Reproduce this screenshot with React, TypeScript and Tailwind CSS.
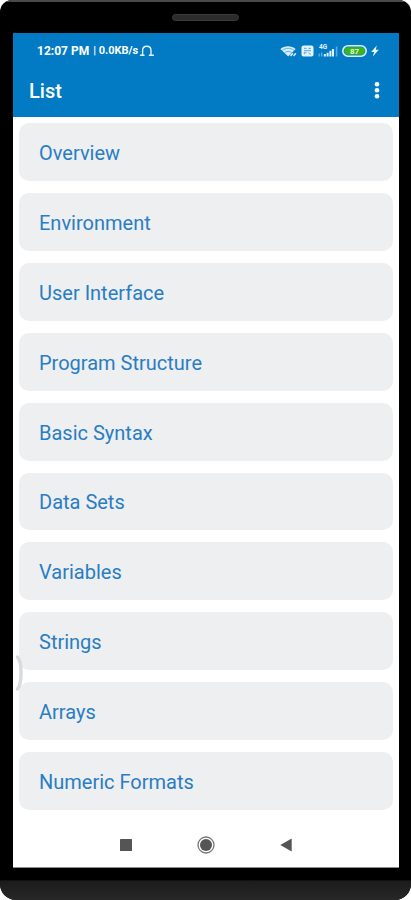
import React from "react";

const topics: string[] = [
  "Overview",
  "Environment",
  "User Interface",
  "Program Structure",
  "Basic Syntax",
  "Data Sets",
  "Variables",
  "Strings",
  "Arrays",
  "Numeric Formats",
];

function BellIcon() {
  return (
    <svg className="h-3 w-4" viewBox="0 0 16 12" fill="none" stroke="#e3f3ff" strokeWidth="1.4" aria-hidden="true">
      <path d="M1.5 10.3H5M3.6 10V5.4C3.6 2.6 5.4 1.2 7.8 1.2s4.2 1.4 4.2 4.2V10M10.4 10.3H14.4" strokeLinecap="round" />
    </svg>
  );
}

function WifiIcon() {
  return (
    <svg className="h-3 w-[17px]" viewBox="0 0 17 12" aria-hidden="true">
      <path d="M0.4 4C4.5 0.2 11.5 0.2 15.6 4L8.2 11.4Z" fill="#d5edfc" />
      <path d="M2.4 5.3c3.4-2.6 8.2-2.6 11.6 0M4.6 7.6c2-1.6 5.2-1.6 7.2 0" fill="none" stroke="#4ba5db" strokeWidth="0.8" />
      <path d="M10.6 11l2.2-2.8M13.6 11l2.2-2.8" stroke="#d5edfc" strokeWidth="1.5" />
    </svg>
  );
}

function VolteIcon() {
  return (
    <svg className="h-3 w-[13px]" viewBox="0 0 13 12" aria-hidden="true">
      <rect x="0.5" y="0.5" width="12" height="11" rx="2" fill="#e3f3ff" />
      <path d="M3 3.4h2.6M7.4 3.4H10M3 5.6h7M3.4 9.3V7.6h2.2M7.4 7.6l2.4 1.8" fill="none" stroke="#6fb4df" strokeWidth="1.1" />
    </svg>
  );
}

function SignalIcon() {
  return (
    <svg className="h-[14px] w-5" viewBox="0 0 20 14" aria-hidden="true">
      <text x="1" y="5.4" fontSize="6.5" fontWeight="700" fontFamily="Roboto, sans-serif" fill="#e3f3ff">4G</text>
      <path d="M1.2 9.5v3M3.6 8.5v4" stroke="#5eb2e4" strokeWidth="1.3" />
      <path d="M6.8 10v2.5M9.6 8.8v3.7M12.4 6.8v5.7M15 5v7.5" stroke="#e3f3ff" strokeWidth="2" />
      <path d="M18.6 2.5v10" stroke="#55abdf" strokeWidth="1.6" />
    </svg>
  );
}

function BatteryIcon() {
  return (
    <svg className="h-3 w-[25px]" viewBox="0 0 25 12" aria-hidden="true">
      <rect x="0.8" y="0.8" width="23.4" height="10.4" rx="5.2" fill="#1380bd" stroke="#d9eefa" strokeWidth="1.6" />
      <path d="M6.2 2.2H19a3.8 3.8 0 0 1 0 7.6H6.2a3.8 3.8 0 0 1 0-7.6Z" fill="#39b51d" />
      <text x="12.5" y="8.9" textAnchor="middle" fontSize="8" fontWeight="700" fontFamily="Roboto, sans-serif" fill="#e6f8dd">87</text>
    </svg>
  );
}

function BoltIcon() {
  return (
    <svg className="h-3 w-2" viewBox="0 0 8 12" fill="#edf8ff" aria-hidden="true">
      <path d="M5.8 0.6L0.2 6.9h3L1.8 11.6l6-6.8H4.7Z" />
    </svg>
  );
}

function StatusBar() {
  return (
    <div className="flex h-9 items-center justify-between pr-5 pl-6 text-white">
      <div className="flex items-center text-xs font-bold">
        <span>12:07 PM</span>
        <span className="pr-px pl-1 text-[11px]">| 0.0KB/s</span>
        <BellIcon />
      </div>
      <div className="flex items-center gap-1">
        <WifiIcon />
        <VolteIcon />
        <SignalIcon />
        <BatteryIcon />
        <BoltIcon />
      </div>
    </div>
  );
}

export default function App() {
  return (
    <div className="flex min-h-screen flex-col bg-white font-['Roboto',sans-serif]">
      <div className="flex flex-1 flex-col overflow-hidden rounded-t-xl rounded-b-2xl bg-black">
        <div className="flex h-[33px] items-center justify-center border-t-2 border-[#4a4a4a]">
          <div className="h-[7px] w-[67px] rounded-full border border-[#3a3a3a] bg-[#2b2b2b]" />
        </div>

        <div className="relative mr-3 ml-[13px] flex flex-1 flex-col bg-white">
          <header className="bg-[#027bc4]">
            <StatusBar />
            <div className="flex h-12 items-center justify-between pr-[10px] pb-1 pl-4">
              <h1 className="text-xl font-medium text-white">List</h1>
              <button type="button" aria-label="More options" className="flex h-8 w-6 items-center justify-center">
                <svg className="h-5 w-2" viewBox="0 0 8 20" fill="#ffffff" aria-hidden="true">
                  <circle cx="4" cy="3.2" r="2.3" />
                  <circle cx="4" cy="9.2" r="2.3" />
                  <circle cx="4" cy="15.2" r="2.3" />
                </svg>
              </button>
            </div>
          </header>

          <main className="flex flex-1 flex-col px-[6px] pt-[6px]">
            <ul className="flex flex-1 flex-col gap-3">
              {topics.map((topic) => (
                <li key={topic} className="flex flex-1">
                  <a
                    href="#"
                    className="flex flex-1 items-center rounded-[10px] bg-[#edeff1] px-5 pt-[14px] pb-3 text-xl text-[#2a7dc2]"
                  >
                    {topic}
                  </a>
                </li>
              ))}
            </ul>
          </main>

          <svg className="absolute top-[622px] left-[2px] h-9 w-2" viewBox="0 0 8 36" fill="none" aria-hidden="true">
            <path d="M2.5 2C7.2 7 7.2 29 2.5 34" stroke="#d8dadb" strokeWidth="3.4" strokeLinecap="round" />
          </svg>

          <nav className="flex h-[58px] items-center justify-center gap-[63px] border-b border-[#8d8d8d] pt-3">
            <button type="button" aria-label="Recent apps" className="flex w-4 justify-center">
              <svg className="h-3 w-3" viewBox="0 0 12 12" aria-hidden="true">
                <rect width="12" height="12" rx="0.6" fill="#555555" />
              </svg>
            </button>
            <button type="button" aria-label="Home" className="flex w-[18px] justify-center">
              <svg className="h-[18px] w-[18px]" viewBox="0 0 18 18" aria-hidden="true">
                <circle cx="9" cy="9" r="8" fill="none" stroke="#777777" strokeWidth="1.3" />
                <circle cx="9" cy="9" r="6" fill="#555555" />
              </svg>
            </button>
            <button type="button" aria-label="Back" className="flex w-4 justify-center">
              <svg className="h-[14px] w-3" viewBox="0 0 12 14" fill="#555555" aria-hidden="true">
                <path d="M0.3 7L11.7 0.5v13Z" />
              </svg>
            </button>
          </nav>
        </div>

        <div className="h-8 bg-linear-to-b from-black from-35% via-[#1b1b1b] via-40% to-[#282828]" />
      </div>
    </div>
  );
}
